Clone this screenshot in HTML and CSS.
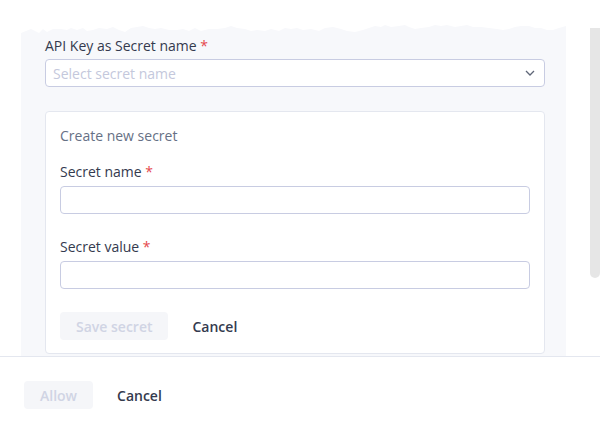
FILE: index.html
```html
<!DOCTYPE html>
<html>
<head>
<meta charset="utf-8">
<link rel="stylesheet" href="styles.css">
</head>
<body>
<div class="scroll-area">
  <div class="content">
    <div class="panel">
      <label class="label">API Key as Secret name <span class="req">*</span></label>
      <div class="select">
        <span class="placeholder">Select secret name</span>
        <svg class="chevron" width="10" height="6" viewBox="0 0 10 6"><path d="M1 1l4 4 4-4" fill="none" stroke="#5f6678" stroke-width="1.3"/></svg>
      </div>
      <div class="card">
        <div class="card-title">Create new secret</div>
        <label class="label field-label">Secret name <span class="req">*</span></label>
        <div class="input"></div>
        <label class="label field-label second">Secret value <span class="req">*</span></label>
        <div class="input"></div>
        <div class="actions">
          <button class="btn-disabled">Save secret</button>
          <button class="btn-link">Cancel</button>
        </div>
      </div>
    </div>
  </div>
  <div class="scrollbar"><div class="thumb"></div></div>
</div>
<div class="footer">
  <button class="btn-disabled allow">Allow</button>
  <button class="btn-link">Cancel</button>
</div>
</body>
</html>
```

FILE: styles.css
```css
html, body {
  margin: 0;
  padding: 0;
  background: #ffffff;
  font-family: "Open Sans", "Noto Sans", sans-serif;
  font-size: 14px;
  color: #343a4e;
}
body {
  width: 600px;
  height: 421px;
  overflow: hidden;
}
.scroll-area {
  height: 356px;
  display: flex;
  border-bottom: 1px solid #e4e7ef;
}
.content {
  flex: 1;
  padding-left: 21px;
  padding-top: 23px;
}
.panel {
  width: 545px;
  height: 333px;
  box-sizing: border-box;
  background: #f7f8fb;
  padding: 13px 21px 0 24px;
  clip-path: polygon(0 10px, 5px 8px, 10px 6px, 14px 8px, 18px 10px, 22px 6px, 26px 9px, 32px 6px, 40px 6px, 46px 7px, 50px 5px, 56px 7px, 62px 5px, 66px 8px, 72px 7px, 78px 5px, 86px 6px, 92px 4px, 98px 7px, 104px 9px, 110px 5px, 116px 4px, 122px 3px, 128px 5px, 134px 6px, 140px 5px, 148px 7px, 156px 7px, 162px 6px, 168px 8px, 174px 5px, 180px 8px, 188px 6px, 196px 6px, 204px 5px, 210px 3px, 216px 5px, 224px 6px, 230px 8px, 236px 7px, 244px 8px, 250px 6px, 258px 8px, 264px 5px, 270px 6px, 276px 5px, 282px 7px, 290px 6px, 298px 8px, 304px 5px, 312px 4px, 320px 6px, 326px 8px, 334px 9px, 342px 7px, 348px 5px, 354px 3px, 360px 4px, 364px 2px, 370px 4px, 378px 3px, 384px 2px, 388px 4px, 394px 6px, 400px 5px, 408px 4px, 414px 2px, 420px 3px, 426px 2px, 434px 4px, 440px 3px, 446px 2px, 452px 4px, 460px 4px, 468px 5px, 476px 6px, 482px 7px, 488px 6px, 494px 4px, 500px 3px, 508px 3px, 514px 5px, 520px 5px, 526px 7px, 532px 7px, 538px 5px, 545px 3px, 545px 100%, 0 100%);
}
.label {
  display: block;
  line-height: 20px;
  color: #343a4e;
}
.req {
  color: #e5484d;
}
.select {
  margin-top: 3px;
  height: 28px;
  box-sizing: border-box;
  border: 1px solid #c8cce2;
  border-radius: 4px;
  background: #ffffff;
  display: flex;
  align-items: center;
  justify-content: space-between;
  padding: 0 9px 0 7px;
}
.placeholder {
  color: #c4c8dc;
}
.card {
  margin-top: 24px;
  height: 243px;
  box-sizing: border-box;
  background: #ffffff;
  border: 1px solid #e4e7ef;
  border-radius: 4px;
  padding: 14px 14px 0 14px;
}
.card-title {
  line-height: 20px;
  color: #667085;
}
.field-label {
  margin-top: 16px;
}
.field-label.second {
  margin-top: 23px;
}
.input {
  margin-top: 4px;
  height: 28px;
  box-sizing: border-box;
  border: 1px solid #c8cce2;
  border-radius: 4px;
  background: #ffffff;
}
.actions {
  margin-top: 23px;
  display: flex;
  align-items: center;
  gap: 24px;
}
button {
  font-family: inherit;
  font-size: 14px;
  font-weight: 600;
  border: none;
  cursor: pointer;
  margin: 0;
}
.btn-disabled {
  height: 28px;
  padding: 0 16px;
  border-radius: 4px;
  background: #f5f6f9;
  color: #d0d4e4;
}
.btn-link {
  background: none;
  padding: 0;
  color: #343a4e;
}
.scrollbar {
  width: 10px;
  padding-top: 28px;
}
.thumb {
  height: 250px;
  background: #e6e6e6;
  border-radius: 0 0 5px 5px;
}
.footer {
  display: flex;
  align-items: center;
  gap: 24px;
  padding: 24px 0 0 24px;
}
.allow {
  height: 28px;
}
```
